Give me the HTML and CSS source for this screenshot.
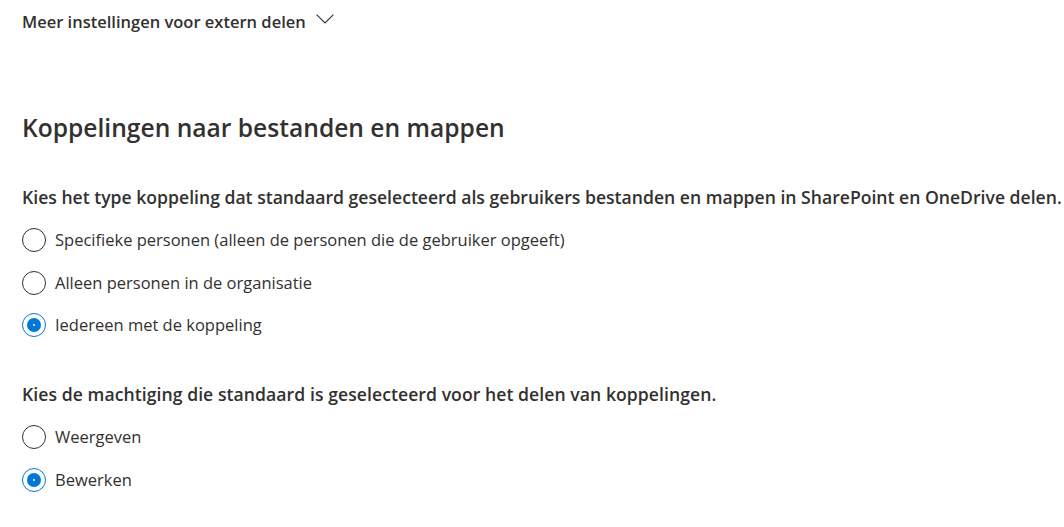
FILE: index.html
```html
<!DOCTYPE html>
<html lang="nl">
<head>
<meta charset="utf-8">
<link rel="stylesheet" href="styles.css">
</head>
<body>
<div class="page">
  <button class="more">
    <span>Meer instellingen voor extern delen</span>
    <svg class="chev" width="18" height="10" viewBox="0 0 18 10"><path d="M0.6 0.6 L9 9 L17.4 0.6" fill="none" stroke="#323130" stroke-width="1.1"/></svg>
  </button>

  <h2 class="title">Koppelingen naar bestanden en mappen</h2>

  <p class="question">Kies het type koppeling dat standaard geselecteerd als gebruikers bestanden en mappen in SharePoint en OneDrive delen.</p>
  <div class="group">
    <div class="opt"><span class="radio"></span><span>Specifieke personen (alleen de personen die de gebruiker opgeeft)</span></div>
    <div class="opt"><span class="radio"></span><span>Alleen personen in de organisatie</span></div>
    <div class="opt"><span class="radio on"></span><span>Iedereen met de koppeling</span></div>
  </div>

  <p class="question q2">Kies de machtiging die standaard is geselecteerd voor het delen van koppelingen.</p>
  <div class="group">
    <div class="opt"><span class="radio"></span><span>Weergeven</span></div>
    <div class="opt"><span class="radio on"></span><span>Bewerken</span></div>
  </div>
</div>
</body>
</html>
```

FILE: styles.css
```css
html, body {
  margin: 0;
  padding: 0;
  background: #ffffff;
}
body {
  font-family: "Open Sans", "Noto Sans", sans-serif;
  color: #323130;
}
.page {
  padding: 9px 0 0 22px;
  white-space: nowrap;
}
.more {
  display: flex;
  align-items: center;
  gap: 10px;
  border: 0;
  background: none;
  padding: 0;
  font: inherit;
  font-size: 16.5px;
  font-weight: 600;
  color: #323130;
  line-height: 26px;
}
.chev {
  margin-top: -7px;
}
.title {
  margin: 77px 0 0 0;
  font-size: 24.6px;
  font-weight: 600;
  line-height: 32px;
}
.question {
  margin: 41px 0 0 0;
  font-size: 17.6px;
  font-weight: 600;
  line-height: 24px;
}
.q2 {
  margin-top: 45px;
  letter-spacing: 0.06px;
}
.group {
  display: flex;
  flex-direction: column;
  gap: 18.5px;
  margin-top: 19px;
}
.opt {
  display: flex;
  align-items: center;
  gap: 9px;
  font-size: 16.5px;
  line-height: 24px;
}
.radio {
  box-sizing: border-box;
  width: 24px;
  height: 24px;
  border: 1px solid #323130;
  border-radius: 50%;
  flex: none;
  display: flex;
  align-items: center;
  justify-content: center;
}
.radio.on {
  border: 1.5px solid #0078d4;
}
.radio.on::after {
  content: "";
  box-sizing: border-box;
  width: 14px;
  height: 14px;
  border-radius: 50%;
  border: 6px solid #0078d4;
  background: #ffffff;
}
```
